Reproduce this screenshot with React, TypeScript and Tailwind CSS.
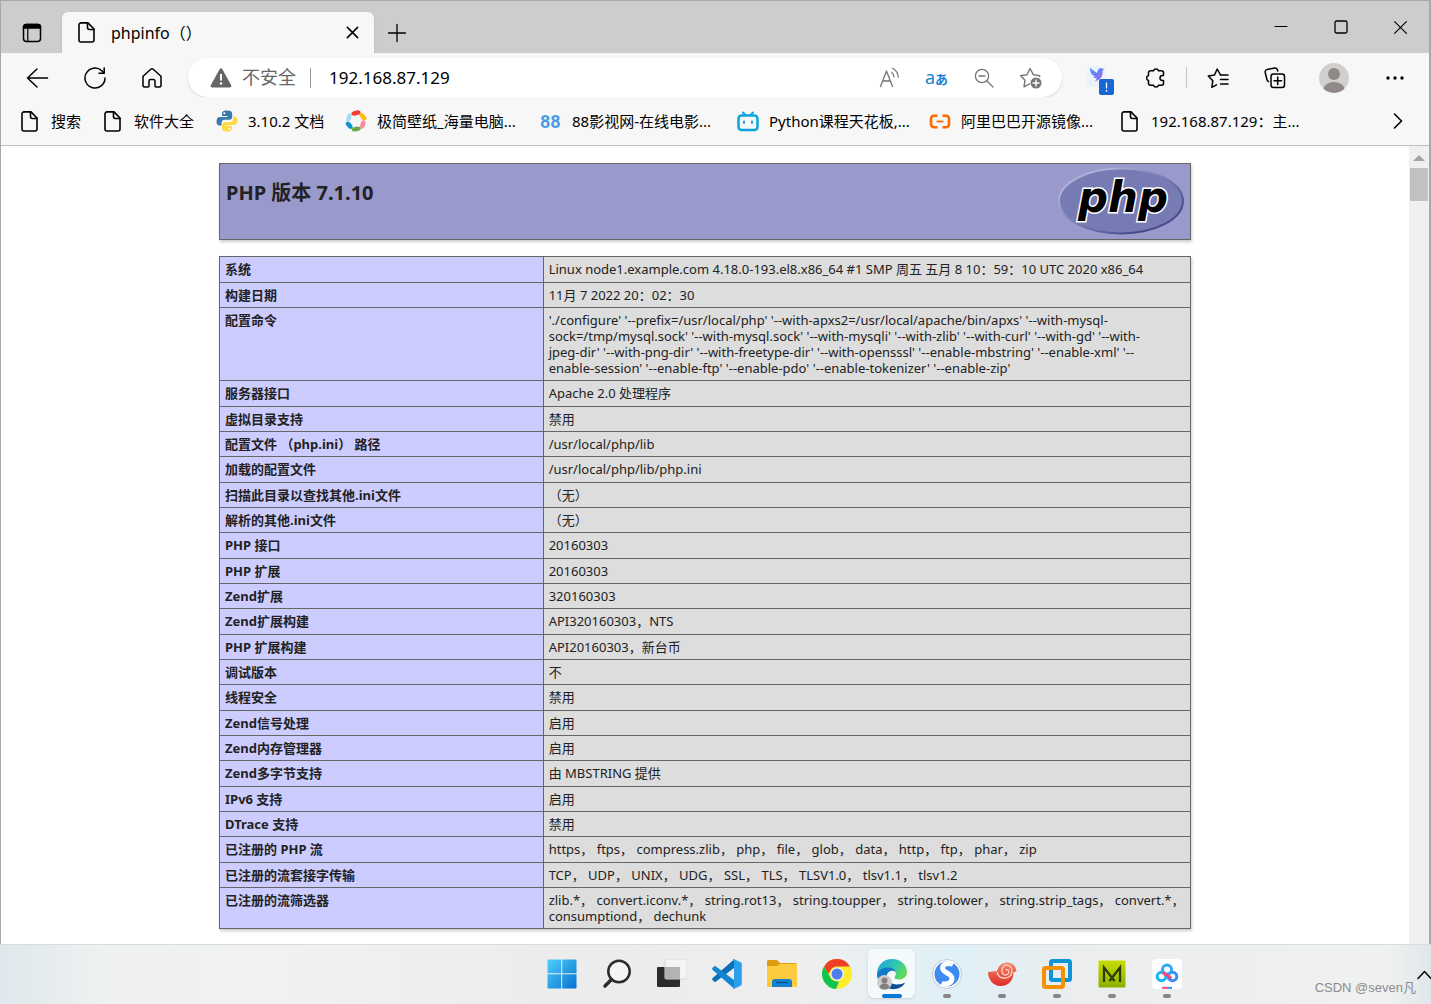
import React from 'react';

const info: [string, string[]][] = [
  ['系统', ['Linux node1.example.com 4.18.0-193.el8.x86_64 #1 SMP 周五 五月 8 10：59：10 UTC 2020 x86_64']],
  ['构建日期', ['11月 7 2022 20：02：30']],
  ['配置命令', [
    "'./configure' '--prefix=/usr/local/php' '--with-apxs2=/usr/local/apache/bin/apxs' '--with-mysql-",
    "sock=/tmp/mysql.sock' '--with-mysql.sock' '--with-mysqli' '--with-zlib' '--with-curl' '--with-gd' '--with-",
    "jpeg-dir' '--with-png-dir' '--with-freetype-dir' '--with-opensssl' '--enable-mbstring' '--enable-xml' '--",
    "enable-session' '--enable-ftp' '--enable-pdo' '--enable-tokenizer' '--enable-zip'",
  ]],
  ['服务器接口', ['Apache 2.0 处理程序']],
  ['虚拟目录支持', ['禁用']],
  ['配置文件 （php.ini） 路径', ['/usr/local/php/lib']],
  ['加载的配置文件', ['/usr/local/php/lib/php.ini']],
  ['扫描此目录以查找其他.ini文件', ['（无）']],
  ['解析的其他.ini文件', ['（无）']],
  ['PHP 接口', ['20160303']],
  ['PHP 扩展', ['20160303']],
  ['Zend扩展', ['320160303']],
  ['Zend扩展构建', ['API320160303，NTS']],
  ['PHP 扩展构建', ['API20160303，新台币']],
  ['调试版本', ['不']],
  ['线程安全', ['禁用']],
  ['Zend信号处理', ['启用']],
  ['Zend内存管理器', ['启用']],
  ['Zend多字节支持', ['由 MBSTRING 提供']],
  ['IPv6 支持', ['启用']],
  ['DTrace 支持', ['禁用']],
  ['已注册的 PHP 流', ['https， ftps， compress.zlib， php， file， glob， data， http， ftp， phar， zip']],
  ['已注册的流套接字传输', ['TCP， UDP， UNIX， UDG， SSL， TLS， TLSV1.0， tlsv1.1， tlsv1.2']],
  ['已注册的流筛选器', [
    'zlib.*， convert.iconv.*， string.rot13， string.toupper， string.tolower， string.strip_tags， convert.*，',
    'consumptiond， dechunk',
  ]],
];

/* ---------- browser icons ---------- */

const line = { fill: 'none', stroke: 'currentColor', strokeLinecap: 'round', strokeLinejoin: 'round' } as const;

const PageIcon = () => (
  <svg width="17" height="21" viewBox="0 0 17 21" className="shrink-0" {...line} strokeWidth="1.6">
    <path d="M3 .9h7L16 7v11a2 2 0 0 1-2 2H3a2 2 0 0 1-2-2V3A2 2 0 0 1 3 .9z" />
    <path d="M9.500 1v4.500a2 2 0 0 0 2 2H16" />
  </svg>
);

const TabActionsIcon = () => (
  <svg width="20" height="20" viewBox="0 0 20 20" {...line} strokeWidth="1.5">
    <rect x="1.500" y="1.500" width="17" height="17" rx="3" />
    <path d="M1.500 5V4a2.500 2.500 0 0 1 2.500-2.500h12A2.500 2.500 0 0 1 18.500 4v1z" fill="currentColor" />
    <path d="M5.800 5v13" strokeWidth="1.200" />
  </svg>
);

const CrossIcon = ({ size, weight }: { size: number; weight: number }) => (
  <svg width={size} height={size} viewBox="0 0 14 14" {...line} strokeWidth={weight}>
    <path d="M1.500 1.500l11 11M12.500 1.500l-11 11" />
  </svg>
);

const PlusIcon = () => (
  <svg width="20" height="20" viewBox="0 0 20 20" {...line} strokeWidth="1.300">
    <path d="M10 1.500v17M1.500 10h17" />
  </svg>
);

const BackIcon = () => (
  <svg width="24" height="22" viewBox="0 0 24 22" {...line} strokeWidth="1.500">
    <path d="M11 2L1.500 11l9.500 9M2 11h19.500" />
  </svg>
);

const RefreshIcon = () => (
  <svg width="24" height="24" viewBox="0 0 24 24" {...line} strokeWidth="1.500">
    <path d="M22 12a10 10 0 1 1-3.200-7.300L21 7" />
    <path d="M21.200 2v5.200h-5.200" />
  </svg>
);

const HomeIcon = () => (
  <svg width="22" height="22" viewBox="0 0 22 22" {...line} strokeWidth="1.500">
    <path d="M2 9.200L9.800 2.200a1.800 1.800 0 0 1 2.400 0L20 9.200V18.500a1.500 1.500 0 0 1-1.500 1.500H15a1 1 0 0 1-1-1v-5a1.500 1.500 0 0 0-1.500-1.500h-3A1.500 1.500 0 0 0 8 14v5a1 1 0 0 1-1 1H3.500A1.500 1.500 0 0 1 2 18.500z" />
  </svg>
);

const WarningIcon = () => (
  <svg width="22" height="20" viewBox="0 0 22 20" className="shrink-0">
    <path d="M9.600 1.200a1.600 1.600 0 0 1 2.800 0l8.800 16a1.600 1.600 0 0 1-1.400 2.400H2.200a1.600 1.600 0 0 1-1.400-2.400z" fill="#666" />
    <path d="M11 6v6.500" stroke="#fff" strokeWidth="2" />
    <circle cx="11" cy="15.500" r="1.300" fill="#fff" />
  </svg>
);

const ReadAloudIcon = () => (
  <svg width="22" height="22" viewBox="0 0 22 22" {...line} strokeWidth="1.300">
    <path d="M1.500 19.500L7.500 4l6 15.500M3.800 14h7.500" />
    <path d="M12.800 5.500c1.300 1.200 2 2.700 2.200 4.500M13.500 1.200c3.500 1.800 5.500 5 5.800 9" strokeWidth="1.200" />
  </svg>
);

const ZoomOutIcon = () => (
  <svg width="20" height="20" viewBox="0 0 20 20" {...line} strokeWidth="1.300">
    <circle cx="8" cy="8" r="6.600" />
    <path d="M5 8h6M13 13l6 6" />
  </svg>
);

const AddFavoriteIcon = () => (
  <svg width="24" height="24" viewBox="0 0 24 24" {...line} strokeWidth="1.400">
    <path d="M20.500 10.500l.2-.9-6.400-.9L11 2.500 8 8.700l-6.500.9L6 14.200 5 20.800l5.500-2.900" />
    <circle cx="17" cy="17" r="5.500" fill="currentColor" stroke="none" />
    <path d="M17 14v6M14 17h6" stroke="#fff" />
  </svg>
);

const BirdIcon = () => (
  <svg width="32" height="34" viewBox="-3 -4 32 34">
    <defs>
      <linearGradient id="bird" x1="0" y1="0" x2="1" y2="1">
        <stop offset="0" stopColor="#3f9bf5" />
        <stop offset="1" stopColor="#a45df5" />
      </linearGradient>
    </defs>
    <rect x="1" y="1" width="19" height="21" rx="3" fill="#edf1fc" />
    <path d="M4 3l7 5 1-3 2-2 4 1-1.500 2c.5 6-3 9.500-7.500 10l2-2.500-4-1 2-1C5 10 4 6.500 4 3z" fill="url(#bird)" />
    <rect x="13" y="14" width="15" height="16" rx="2" fill="#1867d4" />
    <path d="M20.500 17.500v6M20.500 25v1.800" stroke="#fff" strokeWidth="1.300" />
  </svg>
);

const PuzzleIcon = () => (
  <svg width="22" height="22" viewBox="0 0 22 22" {...line} strokeWidth="1.500">
    <path d="M5.500 3.800h3a2.600 2.600 0 0 1 5 0h3A2 2 0 0 1 18.500 5.800V8.500h-1a2.500 2.500 0 0 0 0 5h1v2.700a2 2 0 0 1-2 2h-3a2.600 2.600 0 0 1-5 0h-3a2 2 0 0 1-2-2v-2.700a2.600 2.600 0 0 1 0-5V5.800a2 2 0 0 1 2-2z" />
  </svg>
);

const FavoritesIcon = () => (
  <svg width="22" height="22" viewBox="0 0 22 22" {...line} strokeWidth="1.500">
    <path d="M13.500 8L10.200 2 7.500 8 1.300 9l4.500 4.800L4.800 20.300l4.700-2.500" />
    <path d="M13.500 8h7.500M13.500 12.500h7.500M13.500 17h7.500" />
  </svg>
);

const CollectionsIcon = () => (
  <svg width="22" height="22" viewBox="0 0 22 22" {...line} strokeWidth="1.500">
    <rect x="7" y="7" width="13.500" height="13.500" rx="2.500" />
    <path d="M13.700 10v7.500M10 13.700h7.500M4.500 14.500a2.500 2.500 0 0 1-1.500-1.700L1.200 5.500A2.500 2.500 0 0 1 3 2.600L10.500 1a2.500 2.500 0 0 1 2.800 1.500l.4 1.500" />
  </svg>
);

const AvatarIcon = () => (
  <svg width="30" height="30" viewBox="0 0 30 30">
    <clipPath id="face"><circle cx="15" cy="15" r="15" /></clipPath>
    <g clipPath="url(#face)">
      <path d="M0 0h30v30H0z" fill="#d2d0ce" />
      <circle cx="15" cy="11" r="6" fill="#8f8a87" />
      <ellipse cx="15" cy="26.500" rx="10.500" ry="7.500" fill="#8f8a87" />
    </g>
  </svg>
);

/* ---------- bookmark icons ---------- */

const PythonIcon = () => (
  <svg width="22" height="22" viewBox="0 0 22 22" className="shrink-0">
    <path d="M11 .5c-4 0-5 1.500-5 3.200V6h5.300v1H3.800C1.500 7 .5 9 .5 11.500s1 4 3 4h2V13c0-2 1.500-3.200 3.500-3.200h4.500c1.500 0 2.700-1.200 2.700-2.800V3.700C16.200 1.500 14.500.5 11 .5z" fill="#3b79ad" />
    <path d="M11 21.500c4 0 5-1.500 5-3.200V16h-5.300v-1h7.500c2.300 0 3.300-2 3.300-4.200 0-2.500-1-4.300-3-4.300h-1.300V9c0 2-1.500 3.200-3.500 3.200H9c-1.700 0-3 1.200-3 2.800v3.300c0 2.200 1.700 3.200 5 3.200z" fill="#ffd845" />
    <circle cx="8.300" cy="3.300" r="1" fill="#fff" />
    <circle cx="13.500" cy="18.700" r="1" fill="#fff" />
  </svg>
);

const RingIcon = () => (
  <svg width="22" height="22" viewBox="0 0 22 22" className="shrink-0">
    <ellipse cx="11" cy="3" rx="4.700" ry="2.400" fill="#f23c33" transform="rotate(-12 11 3)" />
    <ellipse cx="18" cy="6.800" rx="4.300" ry="2.400" fill="#fdbb13" transform="rotate(50 18 6.800)" />
    <ellipse cx="17.800" cy="14.500" rx="4.300" ry="2.400" fill="#f98ba5" transform="rotate(108 17.800 14.500)" />
    <ellipse cx="11.300" cy="19" rx="4.500" ry="2.300" fill="#6fa544" transform="rotate(-12 11.300 19)" />
    <ellipse cx="4.200" cy="15.300" rx="4.300" ry="2.400" fill="#1592d0" transform="rotate(50 4.200 15.300)" />
    <ellipse cx="4" cy="7.500" rx="4.300" ry="2.300" fill="#a4dbf5" transform="rotate(108 4 7.500)" />
  </svg>
);

const TvIcon = () => (
  <svg width="22" height="21" viewBox="0 0 22 21" className="shrink-0" {...line} stroke="#0aa5dd" strokeWidth="2.500">
    <rect x="1.500" y="4.500" width="19" height="14.500" rx="3" />
    <path d="M6 1.500l2.500 2.500M16 1.500L13.500 4M7 10.500v1.500M15 10.500v1.500" strokeWidth="2" />
  </svg>
);

const AliIcon = () => (
  <svg width="22" height="15" viewBox="0 0 22 15" className="shrink-0" fill="none" stroke="#ff6a00" strokeWidth="2.600">
    <path d="M8.500 1.800H5A3 3 0 0 0 2 4.800v5.400a3 3 0 0 0 3 3h3.500M13.500 1.800H17a3 3 0 0 1 3 3v5.400a3 3 0 0 1-3 3h-3.500" />
    <path d="M7.500 7.500h7" strokeWidth="1.800" />
  </svg>
);

const bookmarks = [
  { label: '搜索', icon: <PageIcon /> },
  { label: '软件大全', icon: <PageIcon /> },
  { label: '3.10.2 文档', icon: <PythonIcon /> },
  { label: '极简壁纸_海量电脑...', icon: <RingIcon /> },
  { label: '88影视网-在线电影...', icon: <span className="w-[22px] font-[Roboto] text-[18px] font-bold text-[#4a9be8]">88</span> },
  { label: 'Python课程天花板,...', icon: <TvIcon /> },
  { label: '阿里巴巴开源镜像...', icon: <AliIcon /> },
  { label: '192.168.87.129：主...', icon: <PageIcon /> },
];

/* ---------- taskbar icons ---------- */

const StartIcon = () => (
  <svg width="30" height="30" viewBox="0 0 30 30">
    <defs>
      <linearGradient id="win" x1="0" y1="0" x2="1" y2="1">
        <stop offset="0" stopColor="#4fd0fb" />
        <stop offset="1" stopColor="#0670d0" />
      </linearGradient>
    </defs>
    <path d="M1.500.5h12.700v13.700H.5V1.500a1 1 0 0 1 1-1zM15.200.5h13.300a1 1 0 0 1 1 1v12.700H15.200zM.5 15.200h13.700v14.300H1.500a1 1 0 0 1-1-1zM15.200 15.200h14.300v13.300a1 1 0 0 1-1 1H15.200z" fill="url(#win)" />
  </svg>
);

const SearchIcon = () => (
  <svg width="30" height="30" viewBox="0 0 30 30" {...line} stroke="#2b2b2b">
    <circle cx="17" cy="12.500" r="10.700" strokeWidth="2.500" fill="#f4f4f4" />
    <path d="M9.500 20.500L3 27" strokeWidth="3.500" />
  </svg>
);

const TaskViewIcon = () => (
  <svg width="30" height="30" viewBox="0 0 30 30">
    <rect x="0" y="8" width="23" height="20" rx="1" fill="#2c2c2c" />
    <rect x="8" y="0" width="22" height="20" rx="1" fill="#f4f4f4" stroke="#d8d8d8" />
    <path d="M8 8h15v12H8z" fill="#b3b3b3" />
  </svg>
);

const CodeIcon = () => (
  <svg width="30" height="30" viewBox="0 0 30 30">
    <path d="M22 .5v8.500L4 22.500a1.500 1.500 0 0 1-2 0l-1.300-1.200a1.500 1.500 0 0 1 0-2.200z" fill="#0a6fb8" />
    <path d="M22 29.500V21L4 7.500a1.500 1.500 0 0 0-2 0L.7 8.700a1.500 1.500 0 0 0 0 2.200z" fill="#1485d0" />
    <path d="M21 .2c.5-.2 1-.2 1.500 0l6 3c.8.300 1.300 1 1.300 1.800v20c0 .8-.5 1.500-1.300 1.800l-6 3c-.5.200-1 .2-1.500 0l1-2.800v-24z" fill="#2ba1ee" />
  </svg>
);

const FolderIcon = () => (
  <svg width="30" height="28" viewBox="0 0 30 28">
    <path d="M0 1.500A1.500 1.500 0 0 1 1.500 0H10l3 3h15.500A1.500 1.500 0 0 1 30 4.500V9H0z" fill="#dd9b12" />
    <path d="M0 6h10l3-2h17v22a1 1 0 0 1-1 1H1a1 1 0 0 1-1-1z" fill="#fdcb3f" />
    <path d="M5 27v-5a3 3 0 0 1 3-3h14a3 3 0 0 1 3 3v5z" fill="#1480d0" />
    <path d="M9 22.500h12" stroke="#0a4f8d" strokeWidth="1.300" />
  </svg>
);

const ChromeIcon = () => (
  <svg width="30" height="30" viewBox="0 0 30 30">
    <circle cx="15" cy="15" r="15" fill="#fdec2e" />
    <path d="M2 7.500a15 15 0 0 1 26 0H15a7.500 7.500 0 0 0-6.500 3.800L6.500 15z" fill="#ee4024" />
    <path d="M2 7.500l6.500 11.200A7.500 7.500 0 0 0 15 22.500h2L14 30A15 15 0 0 1 2 7.500z" fill="#0ec64f" />
    <circle cx="15" cy="15" r="6.800" fill="#f1f1f1" />
    <circle cx="15" cy="15" r="5.500" fill="#4f7fee" />
  </svg>
);

const EdgeIcon = () => (
  <svg width="32" height="32" viewBox="0 0 32 32" className="shrink-0">
    <defs>
      <linearGradient id="edgeTop" x1="0" y1="0" x2="1" y2=".5">
        <stop offset="0" stopColor="#1f9de0" />
        <stop offset=".6" stopColor="#2dc7b4" />
        <stop offset="1" stopColor="#63d95a" />
      </linearGradient>
    </defs>
    <path d="M1 16C1 7 8 1 16 1c9 0 15 6 15 13 0 5-4 7.500-8 7.500-3 0-4.500-1-4.500-2 0-.8 1.300-1.300 1.300-3.500 0-3-3-5-7-5-5 0-9.500 2-11.800 5z" fill="url(#edgeTop)" />
    <path d="M1 16c2-4 6-6.500 11-6.500 3.500 0 6.500 1.500 7.500 4-5-2-9 1-9 6 0 6 5 10 10 11.300C9 33 1 25 1 16z" fill="#1277c6" />
    <path d="M11 16c-1.500 6 4 10.500 10 10.500 3.500 0 6-1 8-2C27 29 22 31.500 17 31 11 30 8 22 11 16z" fill="#0d4f94" />
    <circle cx="8.500" cy="24.500" r="7.500" fill="#cfcdcb" />
    <circle cx="8.500" cy="22.500" r="3" fill="#85807d" />
    <path d="M3.500 29.500a5 4 0 0 1 10 0 7.500 7.500 0 0 1-10 0z" fill="#85807d" />
  </svg>
);

const SogouIcon = () => (
  <svg width="30" height="30" viewBox="0 0 30 30">
    <circle cx="15" cy="15" r="14.500" fill="#fff" stroke="#c4c8ce" />
    <circle cx="15" cy="15" r="12.500" fill="#3d8af0" />
    <path d="M21 5.500c-4-2-10.500-1-10.500 3.500 0 5 9.500 5 9.500 10.500 0 5-6 6.500-10.500 5" fill="none" stroke="#fff" strokeWidth="5" />
  </svg>
);

const ShellIcon = () => (
  <svg width="30" height="26" viewBox="0 0 30 26">
    <defs>
      <linearGradient id="shell" x1="0" y1="0" x2="0" y2="1">
        <stop offset="0" stopColor="#f58a68" />
        <stop offset="1" stopColor="#dd2b27" />
      </linearGradient>
    </defs>
    <path d="M1 11l9-1C11.500 5 15 1.500 20 1.500c5.500 0 9 3.500 9.500 9l-3 .5c.5 8-5 14-13 14C6 25 1 18 1 11z" fill="url(#shell)" />
    <path d="M10 11c1 4.500 4.500 6.500 8.500 6 4-.5 6.500-3.500 6.500-7.500 0-3.500-2.500-5.500-5.500-5.500S15 7 15 10s2 4.200 4 4 3.300-2 2.800-3.800-2.300-2-3-1" fill="none" stroke="#fbd3c6" strokeWidth="1.300" />
  </svg>
);

const VmwareIcon = () => (
  <svg width="30" height="30" viewBox="0 0 30 30" fill="none" strokeWidth="4">
    <rect x="9" y="2" width="19" height="19" rx="1.500" stroke="#0e94d6" />
    <rect x="2" y="9" width="19" height="19" rx="1.500" stroke="#f59100" />
    <path d="M9 13v6.500A1.500 1.500 0 0 0 10.500 21H15" stroke="#0e94d6" strokeWidth="1" />
  </svg>
);

const MobaIcon = () => (
  <svg width="28" height="28" viewBox="0 0 28 28">
    <defs>
      <linearGradient id="moba" x1="0" y1="0" x2="0" y2="1">
        <stop offset="0" stopColor="#c8dc00" />
        <stop offset="1" stopColor="#8bb000" />
      </linearGradient>
    </defs>
    <rect x=".5" y=".5" width="27" height="27" rx="1" fill="url(#moba)" />
    <path d="M6 22V7.500L16.500 21M22 22V7.500L11.500 21" fill="none" stroke="#2d3a08" strokeWidth="2.200" />
  </svg>
);

const NetdiskIcon = () => (
  <svg width="30" height="30" viewBox="0 0 30 30" fill="none" strokeWidth="3">
    <rect width="30" height="30" rx="4" fill="#fff" />
    <circle cx="9.500" cy="17.500" r="4.300" stroke="#19b4f5" />
    <circle cx="20.500" cy="17.500" r="4.300" stroke="#3a8df5" />
    <circle cx="15" cy="10.500" r="4.500" stroke="#31a9f6" />
    <path d="M11 13.500c1.500 2 2.500 2 4 2.500s3 2 4 4" stroke="#f5477c" />
    <path d="M10 28.800h5" stroke="#f5477c" strokeWidth="2" />
    <path d="M15 28.800h5" stroke="#3a8df5" strokeWidth="2" />
  </svg>
);

const tasks = [
  { name: '开始', icon: <StartIcon /> },
  { name: '搜索', icon: <SearchIcon /> },
  { name: '任务视图', icon: <TaskViewIcon /> },
  { name: 'Visual Studio Code', icon: <CodeIcon /> },
  { name: '文件资源管理器', icon: <FolderIcon /> },
  { name: 'Chrome', icon: <ChromeIcon /> },
  { name: 'Edge', icon: <EdgeIcon />, active: true },
  { name: '搜狗', icon: <SogouIcon />, running: true },
  { name: 'Xshell', icon: <ShellIcon />, running: true },
  { name: 'VMware', icon: <VmwareIcon />, running: true },
  { name: 'MobaXterm', icon: <MobaIcon />, running: true },
  { name: '百度网盘', icon: <NetdiskIcon />, running: true },
];

const PhpLogo = () => (
  <svg width="126" height="68" viewBox="0 0 126 68" className="shrink-0">
    <defs>
      <linearGradient id="rim" x1="0" y1="0" x2="1" y2="1">
        <stop offset=".2" stopColor="#aeb2d5" />
        <stop offset=".5" stopColor="#777bb3" />
        <stop offset=".8" stopColor="#484c89" />
      </linearGradient>
    </defs>
    <ellipse cx="63" cy="34" rx="62" ry="32.500" fill="#777bb3" stroke="url(#rim)" strokeWidth="2" />
    <text x="65" y="45" textAnchor="middle" fontSize="42" fontStyle="italic" fontWeight="700" fill="#000" stroke="#fff" strokeWidth="3" paintOrder="stroke" fontFamily="'DejaVu Sans', sans-serif">
      php
    </text>
  </svg>
);

type IconButtonProps = { label: string; className: string; children: React.ReactNode };

const IconButton = ({ label, className, children }: IconButtonProps) => (
  <button aria-label={label} className={`flex shrink-0 items-center justify-center ${className}`}>
    {children}
  </button>
);

export default function App() {
  return (
    <div className="flex h-screen flex-col overflow-hidden bg-white font-['Noto_Sans','Noto_Sans_CJK_SC',sans-serif] text-black [text-spacing-trim:space-all]">
      <div className="flex min-h-0 flex-1 flex-col border-r-2 border-l border-[#a9a9a9]">
        {/* Tab strip */}
        <header className="flex h-[53px] shrink-0 items-end border-t border-[#a9a9a9] bg-[#cdcdcd]">
          <IconButton label="标签页操作" className="h-[41px] w-[61px]"><TabActionsIcon /></IconButton>
          <div className="flex h-[41px] w-[312px] items-center rounded-t-md bg-[#f7f7f7] pl-4 shadow-sm">
            <PageIcon />
            <span className="ml-4 flex-1 text-[16px]">phpinfo（）</span>
            <IconButton label="关闭标签页" className="h-full w-11"><CrossIcon size={13} weight={1.7} /></IconButton>
          </div>
          <IconButton label="新建标签页" className="h-[41px] w-[46px]"><PlusIcon /></IconButton>
          <div className="ml-auto flex h-full">
            <IconButton label="最小化" className="w-[60px]">
              <svg width="14" height="14" viewBox="0 0 14 14" {...line}><path d="M1 6.500h12" /></svg>
            </IconButton>
            <IconButton label="最大化" className="w-[60px]">
              <svg width="14" height="14" viewBox="0 0 14 14" {...line} strokeWidth="1.300"><rect x="1" y="1" width="12" height="12" rx="1.500" /></svg>
            </IconButton>
            <IconButton label="关闭" className="w-[58px]"><CrossIcon size={15} weight={1.1} /></IconButton>
          </div>
        </header>

        {/* Toolbar */}
        <div className="flex h-11 shrink-0 items-end bg-[#f7f7f7] pr-1 pl-2">
          <IconButton label="后退" className="h-[39px] w-[57px]"><BackIcon /></IconButton>
          <IconButton label="刷新" className="h-[39px] w-[57px]"><RefreshIcon /></IconButton>
          <IconButton label="主页" className="h-[39px] w-[57px]"><HomeIcon /></IconButton>
          <div className="mr-2 ml-2 flex h-[39px] min-w-0 flex-1 items-center rounded-full bg-white pr-2 pl-[22px] shadow-sm">
            <WarningIcon />
            <label htmlFor="address" className="ml-[10px] shrink-0 text-[18px] text-[#666]">不安全</label>
            <span className="mx-[14px] h-5 w-px bg-[#999]" />
            <input id="address" className="ml-1 min-w-0 flex-1 text-[17px] outline-none" defaultValue="192.168.87.129" />
            <div className="flex text-[#757575]">
              <IconButton label="大声朗读" className="w-[47px]"><ReadAloudIcon /></IconButton>
              <button aria-label="翻译" className="flex w-[47px] items-baseline justify-center text-[18px] leading-6 text-[#1a7fd6]">
                a<span className="text-[13px] font-bold">あ</span>
              </button>
              <IconButton label="缩小" className="w-[47px]"><ZoomOutIcon /></IconButton>
              <IconButton label="收藏此页" className="w-[47px]"><AddFavoriteIcon /></IconButton>
            </div>
          </div>
          <IconButton label="插件" className="h-[39px] w-[57px]"><BirdIcon /></IconButton>
          <IconButton label="扩展" className="h-[39px] w-[57px]"><PuzzleIcon /></IconButton>
          <span className="mx-0.5 mb-[9px] h-[21px] w-px bg-[#c4c4c4]" />
          <IconButton label="收藏夹" className="h-[39px] w-[57px]"><FavoritesIcon /></IconButton>
          <IconButton label="集锦" className="h-[39px] w-[57px]"><CollectionsIcon /></IconButton>
          <IconButton label="个人资料" className="h-[39px] w-[62px]"><AvatarIcon /></IconButton>
          <IconButton label="设置及其他" className="h-[39px] w-[60px]">
            <svg width="20" height="4" viewBox="0 0 20 4"><circle cx="3" cy="2" r="1.700" /><circle cx="10" cy="2" r="1.700" /><circle cx="17" cy="2" r="1.700" /></svg>
          </IconButton>
        </div>

        {/* Bookmarks bar */}
        <nav className="flex h-[49px] shrink-0 items-center border-b border-[#bfbfbf] bg-[#f7f7f7] pl-5">
          <div className="grid flex-1 grid-cols-[83px_112px_129px_195px_197px_192px_192px_1fr]">
            {bookmarks.map((b) => (
              <a key={b.label} href="#" className="flex items-center gap-[10px] text-[15px] whitespace-nowrap">
                <span className="flex min-w-5 shrink-0 items-center">{b.icon}</span>
                {b.label}
              </a>
            ))}
          </div>
          <IconButton label="更多收藏" className="h-full w-[62px]">
            <svg width="10" height="16" viewBox="0 0 10 16" {...line} strokeWidth="1.600"><path d="M1.500 1l7 7-7 7" /></svg>
          </IconButton>
        </nav>

        {/* Page */}
        <div className="flex min-h-0 flex-1">
          <main className="min-w-0 flex-1 overflow-hidden pt-[17px] text-[13px] leading-4 text-[#222]">
            <div className="mx-auto flex h-[77px] max-w-[972px] justify-between border border-[#666] bg-[#9999cc] px-[6px] pt-[3px] shadow-[1px_2px_3px_#ccc]">
              <h1 className="pt-[14px] text-[20px] leading-6 font-bold">PHP 版本 7.1.10</h1>
              <PhpLogo />
            </div>
            <table className="mx-auto mt-4 w-full max-w-[972px] table-fixed border-collapse shadow-[1px_2px_3px_#ccc]">
              <tbody>
                {info.map(([name, lines]) => (
                  <tr key={name} className="nth-[3n+1]:h-[26px]">
                    <th scope="row" className="w-1/3 border border-[#666] bg-[#ccccff] px-[5px] py-1 text-left align-top font-bold">{name}</th>
                    <td className="border border-[#666] bg-[#dddddd] px-[5px] py-1 align-top">
                      {lines.map((l) => <div key={l}>{l}</div>)}
                    </td>
                  </tr>
                ))}
              </tbody>
            </table>
          </main>
          <div className="flex w-5 shrink-0 flex-col items-center bg-[#f0f0f0] pt-[9px]">
            <svg width="12" height="6" viewBox="0 0 12 6"><path d="M6 0l6 6H0z" fill="#a3a3a3" /></svg>
            <div className="mt-[7px] h-[33px] w-[18px] bg-[#c1c1c1]" />
          </div>
        </div>
      </div>

      {/* Taskbar */}
      <footer className="relative flex h-[60px] shrink-0 justify-center border-t border-[#d9dcdd] bg-[linear-gradient(to_right,#dfe8ec,#eff2f1_8%,#f1f1f1_20%,#ececec_40%,#eeeeee_56%,#dff0f7_67%,#ebedef_75%,#eff0f0_92%,#f0f1f1_97%,#dfe6e9)] pl-[297px]">
        {tasks.map((t) => (
          <button
            key={t.name}
            aria-label={t.name}
            className={`relative mx-1 mt-1 mb-[6px] flex w-[47px] items-center justify-center rounded-md ${t.active ? 'bg-white/60 shadow-sm' : ''}`}
          >
            {t.icon}
            {t.active && <span className="absolute bottom-0 h-1 w-5 rounded-full bg-[#0a78d4]" />}
            {t.running && <span className="absolute bottom-0 h-1 w-2 rounded-full bg-[#868686]" />}
          </button>
        ))}
        <IconButton label="显示隐藏的图标" className="absolute top-6 right-0 h-3 w-[14px]">
          <svg width="14" height="10" viewBox="0 0 14 10" {...line} strokeWidth="1.500"><path d="M1 8.500L7.500 1.500 14 8.500" /></svg>
        </IconButton>
        <span className="absolute right-[15px] bottom-1 font-['Liberation_Sans','Noto_Sans_CJK_SC',sans-serif] text-[13px] leading-6 text-[#8c8c8c]">CSDN @seven凡</span>
      </footer>
    </div>
  );
}
